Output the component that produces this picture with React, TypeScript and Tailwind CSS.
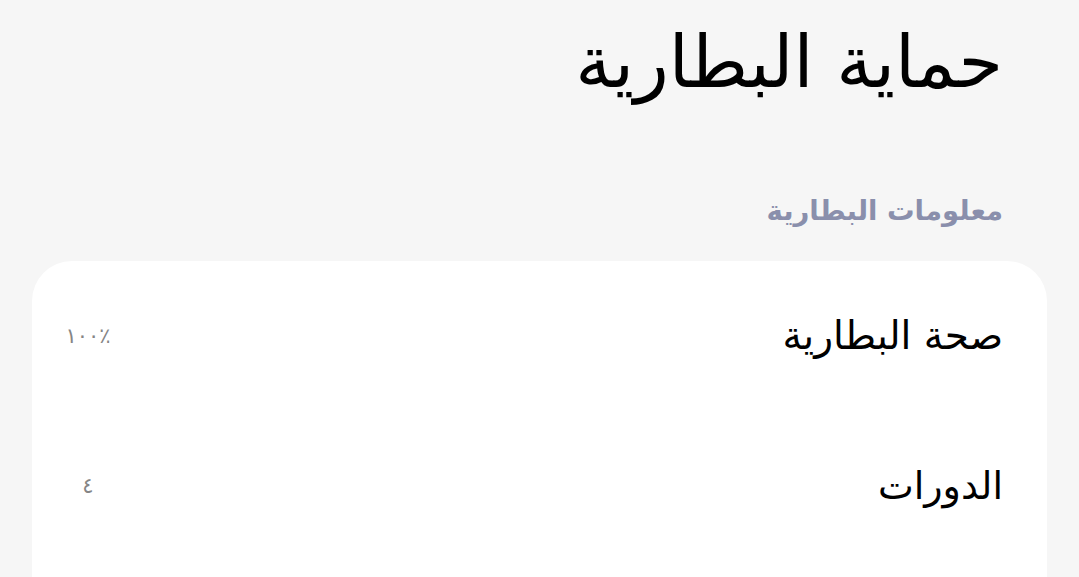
const rows = [
  { label: 'صحة البطارية', value: '١٠٠٪', size: 'text-[39px]' },
  { label: 'الدورات', value: '٤', size: 'text-[38px]' },
];

export default function App() {
  return (
    <div
      dir="rtl"
      className="h-[577px] w-full overflow-hidden bg-[#f6f6f6] text-black"
      style={{ fontFamily: '"DejaVu Sans", "Noto Sans", sans-serif' }}
    >
      <h1 className="pr-[76px] pt-[14px] text-[72px] font-normal leading-[96px]">حماية البطارية</h1>

      <h2 className="mt-[82px] pr-[76px] text-[27.5px] font-bold leading-[36px] text-[#8a8fac]">
        معلومات البطارية
      </h2>

      <div className="mx-[32px] mt-[33px] h-[400px] rounded-[40px] bg-white">
        {rows.map((row) => (
          <div key={row.label} className="flex h-[150px] items-center justify-between pl-[33px] pr-[44px]">
            <span className={`${row.size} leading-[48px]`}>{row.label}</span>
            <span dir="ltr" className="w-[46px] text-center text-[21px] leading-[28px] text-[#858585]">
              {row.value}
            </span>
          </div>
        ))}
      </div>
    </div>
  );
}
